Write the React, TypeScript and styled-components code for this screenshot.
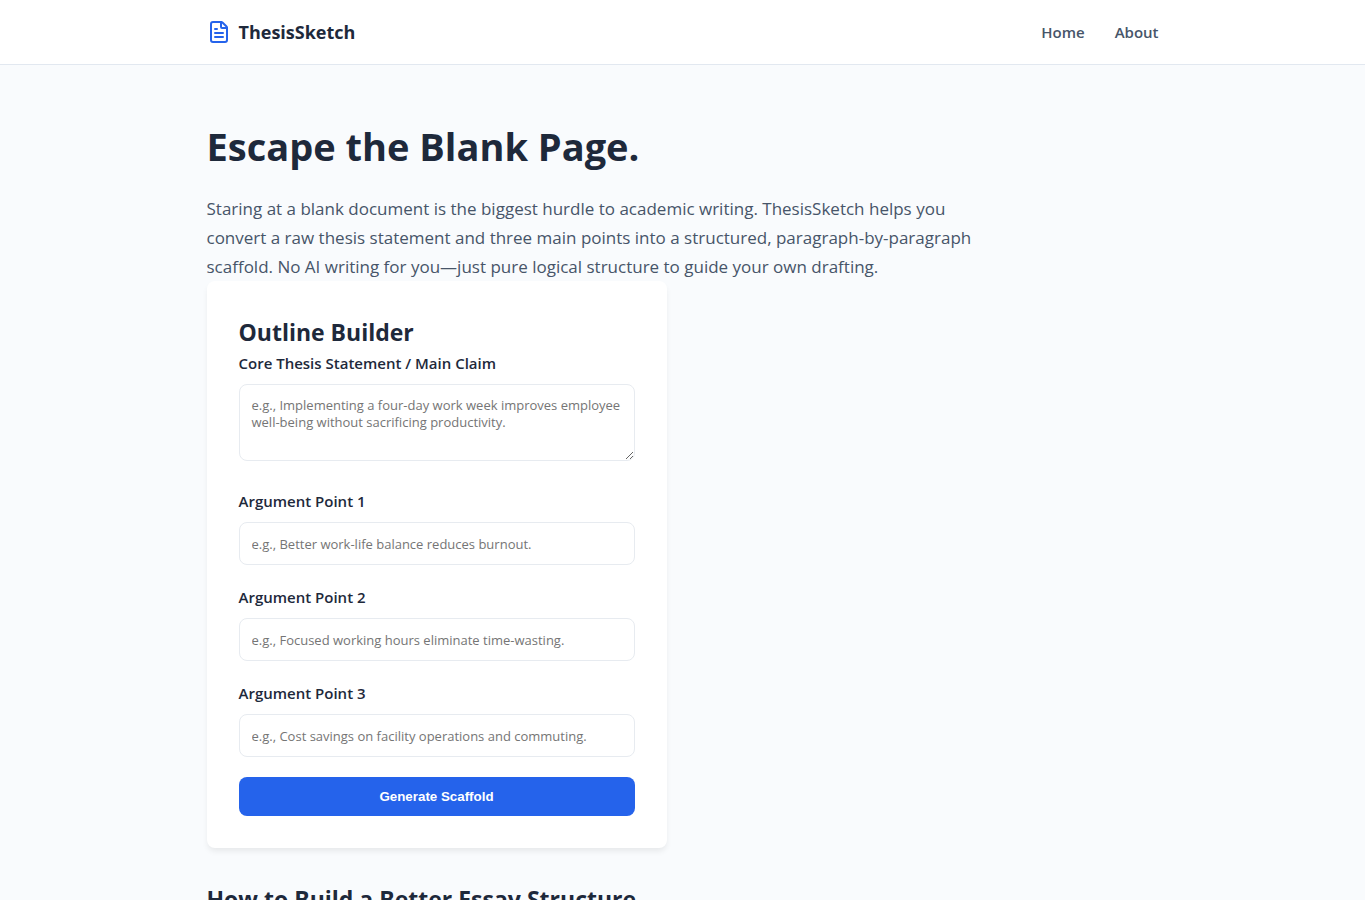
import React from 'react';
import styled, { createGlobalStyle } from 'styled-components';
import { FileText } from 'lucide-react';

const GlobalStyle = createGlobalStyle`
  *, *::before, *::after { box-sizing: border-box; }
  body {
    margin: 0;
    background: #f9fbfd;
    color: #1e293b;
    font-family: 'Segoe UI', 'Open Sans', 'Noto Sans', sans-serif;
    font-size: 15px;
    line-height: 25px;
  }
  h1, h2, p { margin: 0; }
`;

const Header = styled.header`
  background: #ffffff;
  border-bottom: 1px solid #e2e8f0;
`;

const Container = styled.div`
  max-width: 1000px;
  margin: 0 auto;
  padding: 0 24px;
`;

const HeaderRow = styled(Container)`
  display: flex;
  align-items: center;
  justify-content: space-between;
  height: 64px;
`;

const Brand = styled.a`
  display: flex;
  align-items: center;
  gap: 8px;
  color: #1e293b;
  font-size: 18px;
  font-weight: 700;
  text-decoration: none;
`;

const Nav = styled.nav`
  display: flex;
  gap: 30px;
`;

const NavLink = styled.a`
  color: #475569;
  font-weight: 600;
  text-decoration: none;
`;

const Main = styled(Container)`
  padding-top: 48px;
  padding-bottom: 48px;
`;

const Hero = styled.section`
  max-width: 780px;
`;

const Title = styled.h1`
  margin-bottom: 14px;
  font-size: 38px;
  line-height: 67px;
  font-weight: 700;
`;

const Lead = styled.p`
  color: #475569;
  font-size: 17px;
  line-height: 29px;
`;

const Columns = styled.div`
  display: grid;
  grid-template-columns: repeat(2, minmax(0, 1fr));
  gap: 32px;
  margin-bottom: 32px;

  @media (max-width: 768px) {
    grid-template-columns: 1fr;
  }
`;

const Card = styled.section`
  padding: 32px;
  background: #ffffff;
  border-radius: 8px;
  box-shadow: 0 4px 6px -1px rgba(0, 0, 0, 0.08);
`;

const Heading = styled.h2`
  font-size: 23px;
  line-height: 38px;
  font-weight: 700;
`;

const Form = styled.form`
  display: flex;
  flex-direction: column;
  gap: 20px;
`;

const Field = styled.div<{ $spaced?: boolean }>`
  display: flex;
  flex-direction: column;
  gap: 8px;
  padding-bottom: ${({ $spaced }) => ($spaced ? 8 : 0)}px;
`;

const Label = styled.label`
  font-weight: 600;
`;

const Input = styled.input`
  width: 100%;
  height: 43px;
  padding: 12px;
  background: #ffffff;
  border: 1px solid #e7ebf0;
  border-radius: 8px;
  color: #1e293b;
  font-family: inherit;
  font-size: 13px;
  line-height: 17px;

  &::placeholder { color: #757575; }
`;

const TextArea = styled(Input).attrs({ as: 'textarea' })`
  display: block;
  height: 77px;
  resize: vertical;
`;

const SubmitButton = styled.button`
  height: 39px;
  border: 0;
  border-radius: 8px;
  background: #2563eb;
  color: #ffffff;
  font-family: 'Liberation Sans', Arial, sans-serif;
  font-weight: 700;
  cursor: pointer;
`;

const ARGUMENTS = [
  'e.g., Better work-life balance reduces burnout.',
  'e.g., Focused working hours eliminate time-wasting.',
  'e.g., Cost savings on facility operations and commuting.',
];

export default function App() {
  return (
    <>
      <GlobalStyle />
      <Header>
        <HeaderRow>
          <Brand href="#">
            <FileText size={24} color="#2563eb" aria-hidden="true" />
            ThesisSketch
          </Brand>
          <Nav>
            <NavLink href="#">Home</NavLink>
            <NavLink href="#">About</NavLink>
          </Nav>
        </HeaderRow>
      </Header>
      <Main as="main">
        <Hero>
          <Title>Escape the Blank Page.</Title>
          <Lead>
            Staring at a blank document is the biggest hurdle to academic writing. ThesisSketch helps you
            convert a raw thesis statement and three main points into a structured, paragraph-by-paragraph
            scaffold. No AI writing for you—just pure logical structure to guide your own drafting.
          </Lead>
        </Hero>
        <Columns>
          <Card>
            <Heading>Outline Builder</Heading>
            <Form onSubmit={(event) => event.preventDefault()}>
              <Field $spaced>
                <Label htmlFor="thesis">Core Thesis Statement / Main Claim</Label>
                <TextArea
                  id="thesis"
                  placeholder="e.g., Implementing a four-day work week improves employee well-being without sacrificing productivity."
                />
              </Field>
              {ARGUMENTS.map((placeholder, index) => (
                <Field key={placeholder}>
                  <Label htmlFor={`argument-${index + 1}`}>{`Argument Point ${index + 1}`}</Label>
                  <Input id={`argument-${index + 1}`} type="text" placeholder={placeholder} />
                </Field>
              ))}
              <SubmitButton type="submit">Generate Scaffold</SubmitButton>
            </Form>
          </Card>
        </Columns>
        <Heading>How to Build a Better Essay Structure</Heading>
      </Main>
    </>
  );
}
